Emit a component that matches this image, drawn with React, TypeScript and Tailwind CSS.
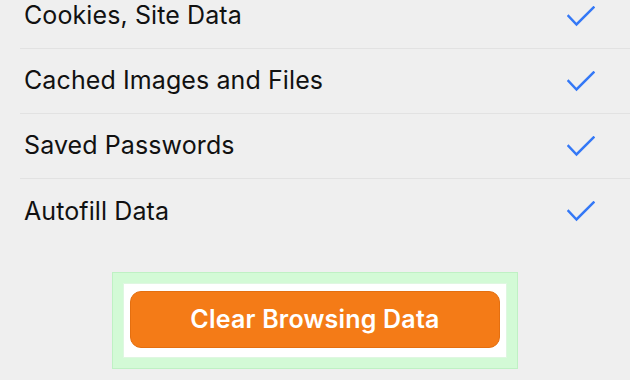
const items = ["Cookies, Site Data", "Cached Images and Files", "Saved Passwords", "Autofill Data"]

function Check() {
  return (
    <svg width="28" height="21" viewBox="0 0 28 21" fill="none">
      <path d="M1.5 10 L9.5 18.5 L26.5 1.5" stroke="#3478f6" strokeWidth="2.5" strokeLinecap="square" />
    </svg>
  )
}

export default function App() {
  return (
    <div className="w-[630px] h-[380px] overflow-hidden bg-[#efefef] font-['Inter','Roboto',sans-serif]">
      <div className="-mt-[16px] pl-5">
        {items.map((label, i) => (
          <div
            key={label}
            className={`flex h-[65px] items-center justify-between pr-[35px] ${i < items.length - 1 ? "border-b border-[#e2e2e2]" : ""}`}
          >
            <span className="pl-[4px] text-[25px] tracking-[0.1px] text-[#111]">{label}</span>
            <Check />
          </div>
        ))}
      </div>
      <div className="mt-[28px] flex justify-center">
        <div className="w-[406px] h-[97px] border border-[#bff1c4] bg-[#d3fad6] p-[10px]">
          <div className="h-full border border-[#dff7e1] bg-white px-[6px] pt-[7px]">
            <button className="flex h-[57px] w-full items-center justify-center rounded-[11px] border border-[#e46f10] bg-[#f47b17] text-[25px] font-semibold tracking-[0.2px] text-white">
              Clear Browsing Data
            </button>
          </div>
        </div>
      </div>
    </div>
  )
}
